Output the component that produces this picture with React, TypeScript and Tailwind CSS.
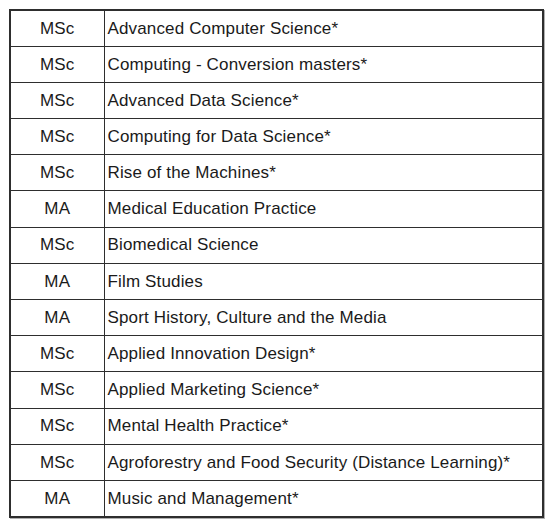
const programmes: [string, string][] = [
  ["MSc", "Advanced Computer Science*"],
  ["MSc", "Computing - Conversion masters*"],
  ["MSc", "Advanced Data Science*"],
  ["MSc", "Computing for Data Science*"],
  ["MSc", "Rise of the Machines*"],
  ["MA", "Medical Education Practice"],
  ["MSc", "Biomedical Science"],
  ["MA", "Film Studies"],
  ["MA", "Sport History, Culture and the Media"],
  ["MSc", "Applied Innovation Design*"],
  ["MSc", "Applied Marketing Science*"],
  ["MSc", "Mental Health Practice*"],
  ["MSc", "Agroforestry and Food Security (Distance Learning)*"],
  ["MA", "Music and Management*"],
];

export default function App() {
  return (
    <div className="w-[552px] h-[527px] bg-white pt-[9px] pl-[9px]" style={{ fontFamily: '"Liberation Sans", Arial, sans-serif' }}>
      <table className="w-[535px] border-collapse border-2 border-[#2e2e2e] shadow-[1px_1px_0_#b0b0b0] text-[17px] tracking-[0.15px] text-[#1a1a1a]">
        <colgroup>
          <col className="w-[94px]" />
          <col />
        </colgroup>
        <tbody>
          {programmes.map(([degree, name], i) => (
            <tr key={i} className="h-[36.2px]">
              <td className="border border-[#2e2e2e] text-center p-0 align-middle">{degree}</td>
              <td className="border border-[#2e2e2e] p-0 pl-[3px] align-middle">{name}</td>
            </tr>
          ))}
        </tbody>
      </table>
    </div>
  );
}
